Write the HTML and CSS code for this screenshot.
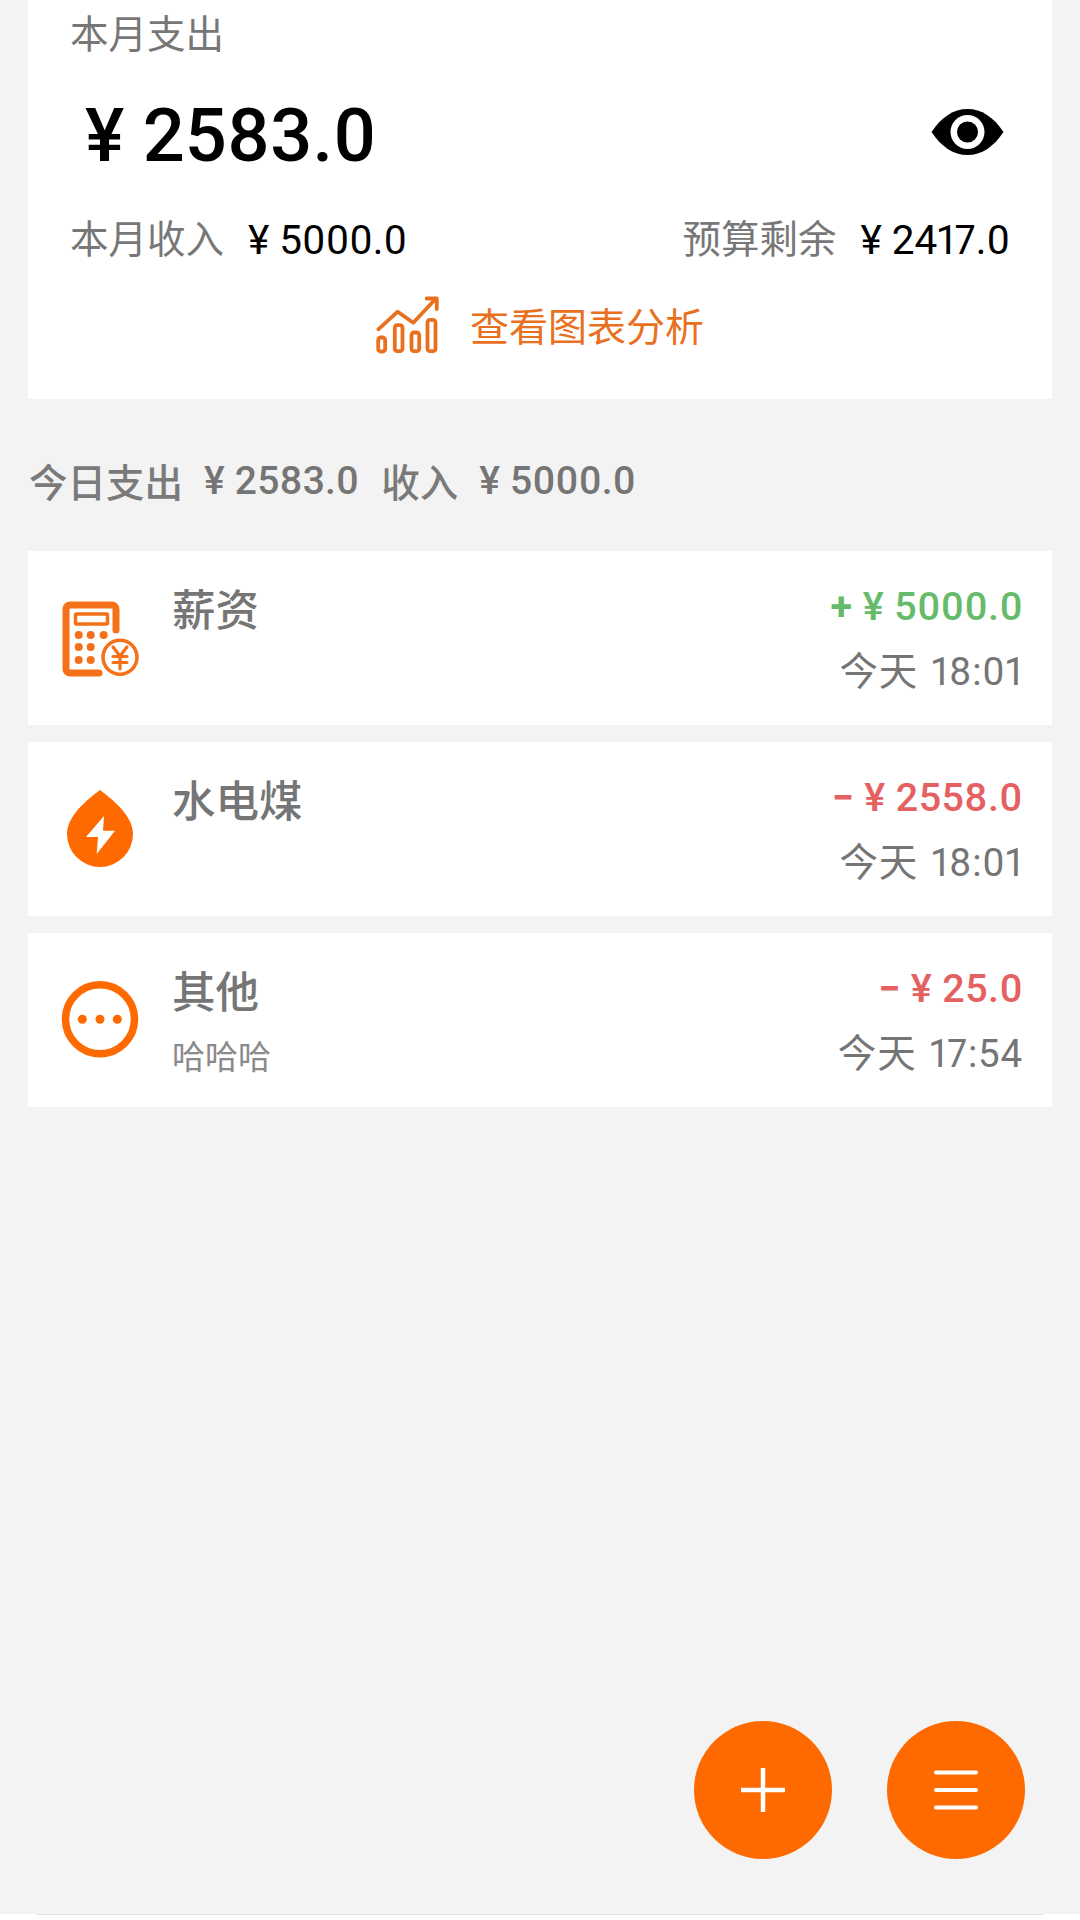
FILE: index.html
```html
<!DOCTYPE html>
<html lang="zh">
<head>
<meta charset="utf-8">
<title>记账</title>
<link rel="stylesheet" href="styles.css">
</head>
<body>
<main class="page">
  <section class="summary">
    <div class="label">本月支出</div>
    <div class="total-row">
      <div class="total">¥ 2583.0</div>
      <svg class="eye" viewBox="0 0 72 46" aria-hidden="true"><path d="M0 23C10 8 22 0 36 0s26 8 36 23C62 38 50 46 36 46S10 38 0 23Z" fill="#000"/><circle cx="36" cy="23" r="17" fill="#fff"/><circle cx="36" cy="23" r="10.500" fill="#000"/></svg>
    </div>
    <div class="stats">
      <div class="stat"><span class="label">本月收入</span><span class="stat-value">¥ 5000.0</span></div>
      <div class="stat"><span class="label">预算剩余</span><span class="stat-value">¥ 2417.0</span></div>
    </div>
    <div class="analysis">
      <svg class="chart" viewBox="0 0 64 60" aria-hidden="true"><g fill="none" stroke="#e8701f" stroke-width="3.800" stroke-linecap="round" stroke-linejoin="round"><rect x="3.200" y="41.500" width="7" height="14" rx="2.500"/><rect x="19.800" y="29.200" width="7.700" height="26" rx="2.500"/><rect x="36.500" y="36.500" width="7.700" height="18.700" rx="2.500"/><rect x="52.500" y="23.800" width="8" height="31.400" rx="2.500"/><path d="M3.300 33.300 22.700 15.700 38.300 26.700 60 3.500M51.700 2.500H61.800V13"/></g></svg>
      <span>查看图表分析</span>
    </div>
  </section>

  <div class="today"><span class="today-label">今日支出</span><span class="today-num">¥ 2583.0</span><span class="today-label today-in">收入</span><span class="today-num">¥ 5000.0</span></div>

  <div class="list">
    <article class="row">
      <svg class="cat" viewBox="0 0 88 88" aria-hidden="true"><g fill="none" stroke="#f4711a" stroke-linecap="round" stroke-linejoin="round"><path stroke-width="7" d="M60 36V15a4 4 0 0 0-4-4H14a4 4 0 0 0-4 4v60a4 4 0 0 0 4 4h29"/><rect stroke-width="3.500" x="19.500" y="20" width="32" height="10" rx="1"/><circle stroke-width="3.500" cx="64" cy="63.300" r="17"/><path stroke-width="3.200" d="M57 53l7 9 7-9M64 62v13M57 62.500h14M57 68.500h14"/></g><g fill="#f4711a"><circle cx="22.700" cy="41" r="4"/><circle cx="34.700" cy="41" r="4"/><circle cx="47.700" cy="41" r="4"/><circle cx="22.700" cy="53" r="4"/><circle cx="34.700" cy="53" r="4"/><circle cx="22.700" cy="66" r="4"/><circle cx="34.700" cy="66" r="4"/></g></svg>
      <div class="info"><div class="name">薪资</div></div>
      <div class="side"><div class="amount income"><span class="sign">+</span> ¥ 5000.0</div><div class="time">今天 18:01</div></div>
    </article>
    <article class="row">
      <svg class="cat" viewBox="0 0 88 88" aria-hidden="true"><path d="M44 5C38 10 11 28 11 49a33 33 0 0 0 66 0C77 28 50 10 44 5Z" fill="#ff6a00"/><path d="M48 31 30 52h12l-1.300 17L59 45.700H47Z" fill="#fff"/></svg>
      <div class="info"><div class="name">水电煤</div></div>
      <div class="side"><div class="amount expense"><span class="sign">−</span> ¥ 2558.0</div><div class="time">今天 18:01</div></div>
    </article>
    <article class="row">
      <svg class="cat" viewBox="0 0 88 88" aria-hidden="true"><circle cx="44" cy="43.300" r="34.500" fill="none" stroke="#ff6a00" stroke-width="7.500"/><g fill="#ff6a00"><circle cx="26.300" cy="43.300" r="4.500"/><circle cx="44" cy="43.300" r="4.500"/><circle cx="61.300" cy="43.300" r="4.500"/></g></svg>
      <div class="info"><div class="name">其他</div><div class="note">哈哈哈</div></div>
      <div class="side"><div class="amount expense"><span class="sign">−</span> ¥ 25.0</div><div class="time">今天 17:54</div></div>
    </article>
  </div>

  <div class="fabs">
    <button class="fab" type="button" aria-label="添加"><svg viewBox="0 0 44 44" class="fab-icon" aria-hidden="true"><path d="M22 1v42M1 22h42" stroke="#fff" stroke-width="4.500" stroke-linecap="round"/></svg></button>
    <button class="fab" type="button" aria-label="菜单"><svg viewBox="0 0 44 44" class="fab-icon" aria-hidden="true"><path d="M2 4.500h40M2 22h40M2 39.500h40" stroke="#fff" stroke-width="4" stroke-linecap="round"/></svg></button>
  </div>
</main>
<div class="edge"></div>
</body>
</html>
```

FILE: styles.css
```css
* { box-sizing: border-box; }
html, body { margin: 0; padding: 0; }
body {
  width: 1080px;
  height: 1920px;
  overflow: hidden;
  background: #fff;
  font-family: Roboto, "Noto Sans CJK SC", sans-serif;
  font-variant-numeric: proportional-nums;
}
.page { position: relative; height: 1914px; background: #f3f3f3; }
.edge { margin: 0 37px; height: 6px; border-top: 1px solid #e2e2e2; }
.summary {
  margin: 0 28px;
  height: 399px;
  padding: 10px 43px 0 42px;
  background: #fff;
}
.label { font-size: 38.500px; line-height: 50px; color: #777; }
.total-row {
  margin-top: 28px;
  padding-left: 15px;
  padding-right: 5px;
  height: 96px;
  display: flex;
  justify-content: space-between;
  align-items: center;
}
.total { font-size: 74px; line-height: 96px; font-weight: 500; color: #000; }
.eye { width: 73px; height: 46px; margin-top: -8px; }
.stats {
  margin-top: 31px;
  margin-right: -1px;
  display: flex;
  justify-content: space-between;
}
.stat { display: flex; align-items: center; height: 50px; gap: 24px; }
.stat-value { font-size: 40.500px; line-height: 50px; color: #000; }
.analysis {
  margin-top: 28px;
  height: 62px;
  display: flex;
  justify-content: center;
  align-items: center;
  gap: 31px;
  font-size: 39px;
  color: #e8701f;
}
.chart { width: 64px; height: 60px; margin-top: 3px; }
.today {
  margin: 57px 0 0 29px;
  display: flex;
  align-items: center;
  height: 50px;
  font-size: 38.500px;
  color: #757575;
}
.today-label { padding-bottom: 3px; font-weight: 500; color: #7a7a7a; }
.today-num { margin-left: 21px; font-size: 39px; font-weight: 500; letter-spacing: 0.200px; }
.today-in { margin-left: 22px; }
.list {
  margin: 45px 28px 0;
  display: flex;
  flex-direction: column;
  gap: 17px;
}
.row {
  height: 174px;
  padding: 0 29px 0 28px;
  background: #fff;
  display: flex;
  align-items: center;
}
.cat { width: 88px; height: 88px; flex: none; }
.info { flex: 1; align-self: stretch; margin-left: 28px; padding-top: 31px; }
.name { font-size: 43.500px; line-height: 60px; font-weight: 500; color: #757575; }
.note { margin-top: 14px; font-size: 33px; line-height: 40px; color: #8a8a8a; }
.side { align-self: stretch; padding-top: 26px; text-align: right; }
.amount { font-size: 39.500px; line-height: 60px; font-weight: 500; letter-spacing: 0.400px; }
.sign { font-weight: 700; }
.income { color: #66bb6a; }
.expense { color: #e56060; }
.time { margin-top: 10px; font-size: 38.500px; line-height: 50px; letter-spacing: 0.800px; word-spacing: 3px; color: #757575; }
.fabs {
  position: absolute;
  left: 694px;
  top: 1721px;
  display: flex;
  gap: 55px;
}
.fab {
  width: 138px;
  height: 138px;
  padding: 0;
  border: 0;
  border-radius: 50%;
  background: #ff6a00;
  display: flex;
  align-items: center;
  justify-content: center;
}
.fab-icon { width: 44px; height: 44px; }
```
